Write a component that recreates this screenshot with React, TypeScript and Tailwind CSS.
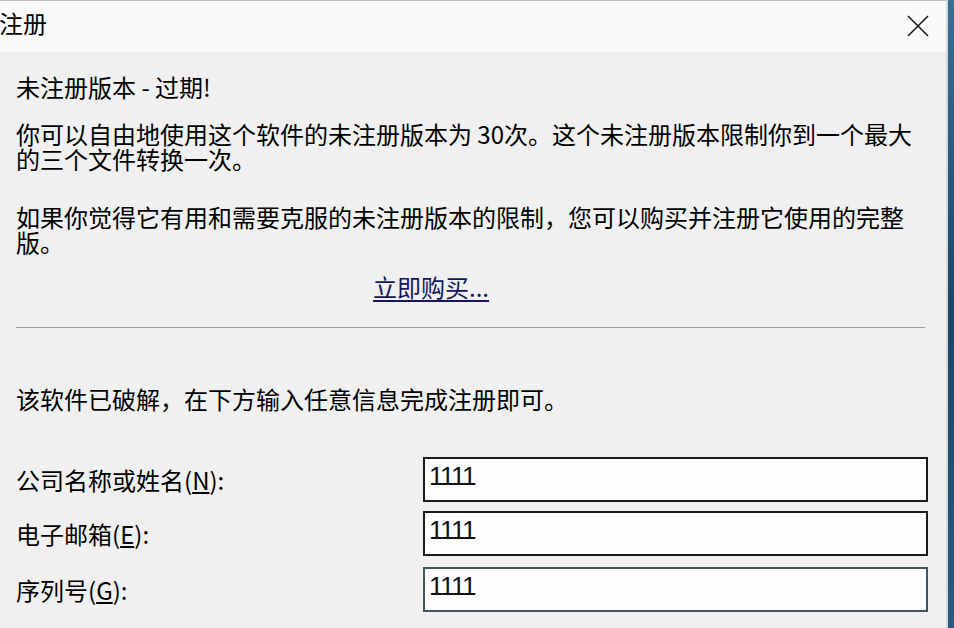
import React from "react";

const cjk = { fontFamily: '"Noto Sans CJK SC", "Noto Sans", sans-serif' };
const mono = { fontFamily: '"Liberation Sans", Arial, sans-serif' };

function Field({ label, k, mt, thin }: { label: string; k: string; mt: string; thin?: boolean }) {
  return (
    <div className={`flex items-center ${mt}`}>
      <div className="w-[407px] flex-none text-[24px] leading-[24px] whitespace-nowrap">
        {label}(<span className="underline underline-offset-2">{k}</span>):
      </div>
      <div
        className={`w-[505px] h-[45px] flex-none bg-[#fdfdfd] pl-[4px] pt-[2px] ${
          thin ? "border-2 border-[#45535a]" : "border-2 border-[#1a1a1a]"
        }`}
      >
        <div className="text-[26px] leading-[30px] tracking-[-1.5px] text-[#111]" style={mono}>
          1111
        </div>
      </div>
    </div>
  );
}

export default function App() {
  return (
    <div className="w-[954px] h-[628px] flex bg-[#f0f0f0] overflow-hidden text-black" style={cjk}>
      <div className="w-[946px] flex-none flex flex-col border-t border-[#b4c0c8]">
        <div className="h-[51px] bg-[#fafafa] flex items-start justify-between pt-[10px]">
          <div className="text-[24px] leading-[24px] -ml-[1px]">注册</div>
          <svg width="22" height="22" viewBox="0 0 22 22" className="mt-[4px] mr-[17px]">
            <path d="M1 1 L21 21 M21 1 L1 21" stroke="#1a1a1a" strokeWidth="1.6" fill="none" />
          </svg>
        </div>
        <div className="flex flex-col pl-[16px] text-[24px] leading-[25px]">
          <div className="mt-[23px] whitespace-nowrap leading-[24px]">未注册版本 - 过期!</div>
          <div className="mt-[22px] whitespace-nowrap">
            你可以自由地使用这个软件的未注册版本为 30次。这个未注册版本限制你到一个最大
            <br />
            的三个文件转换一次。
          </div>
          <div className="mt-[33px] whitespace-nowrap">
            如果你觉得它有用和需要克服的未注册版本的限制，您可以购买并注册它使用的完整
            <br />
            版。
          </div>
          <div className="mt-[21px] ml-[357px] leading-[24px]">
            <span className="underline underline-offset-[3px] text-[#15155a]">立即购买...</span>
          </div>
          <div className="mt-[28px] w-[909px] border-t border-[#9c9c9c]" />
          <div className="mt-[59px] whitespace-nowrap leading-[24px]">
            该软件已破解，在下方输入任意信息完成注册即可。
          </div>
          <div className="mt-[46px]" />
          <Field label="公司名称或姓名" k="N" mt="" />
          <Field label="电子邮箱" k="E" mt="mt-[9px]" />
          <Field label="序列号" k="G" mt="mt-[11px]" thin />
        </div>
      </div>
      <div className="flex-1 border-l-2 border-[#d0dae2] bg-gradient-to-b from-[#3a6f96] via-[#1c4566] to-[#2b5a7d]" />
    </div>
  );
}
